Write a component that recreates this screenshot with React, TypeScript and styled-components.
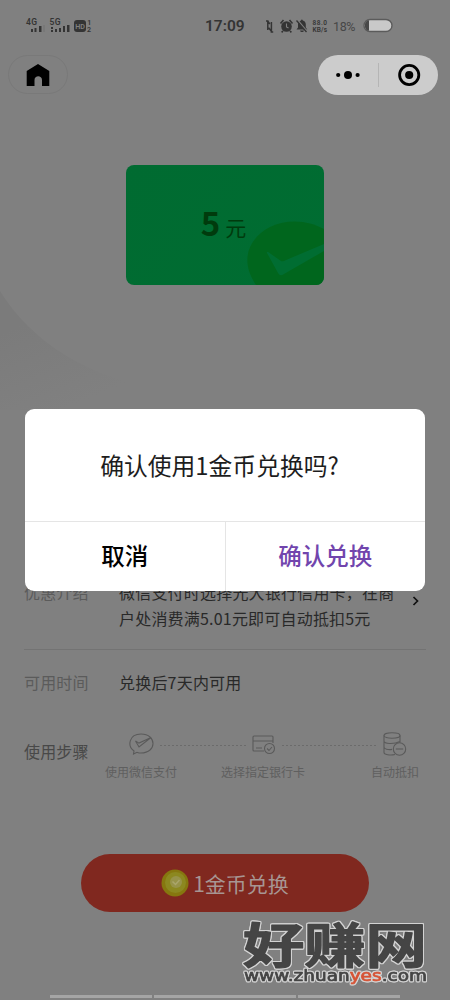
import React from 'react';
import styled, { createGlobalStyle } from 'styled-components';

const Global = createGlobalStyle`
  * { box-sizing: border-box; }
  body { margin: 0; background: #808080; }
  button { font: inherit; border: 0; background: none; padding: 0; margin: 0; }
`;

const Screen = styled.main`
  position: relative;
  width: 450px;
  height: 1000px;
  overflow: hidden;
  display: flex;
  flex-direction: column;
  background: #808080;
  color: #202020;
  font-family: 'Noto Sans CJK SC', sans-serif;
`;

const Backdrop = styled.svg`
  position: absolute;
  left: 0;
  top: 280px;
`;

const StatusBar = styled.header`
  display: flex;
  align-items: center;
  height: 52px;
  padding-left: 25px;
  color: #343434;
  font-family: Roboto, sans-serif;
`;

const Clock = styled.time`
  margin-left: 113px;
  width: 41px;
  font-size: 15.5px;
  font-weight: 600;
  line-height: 20px;
  white-space: nowrap;
`;

const StatusIcons = styled.svg`
  margin-left: 19px;
`;

const NavBar = styled.nav`
  position: relative;
  display: flex;
  justify-content: space-between;
  height: 43px;
  padding: 3px 12px 0 8px;
`;

const HomeButton = styled.button`
  display: flex;
  align-items: center;
  justify-content: center;
  width: 60px;
  height: 39px;
  border: 1px solid #797979;
  border-radius: 20px;
`;

const Capsule = styled.div`
  display: flex;
  align-items: center;
  width: 120px;
  height: 40px;
  border-radius: 20px;
  background: #cccccc;
`;

const Coupon = styled.section`
  position: relative;
  display: flex;
  align-items: baseline;
  justify-content: center;
  flex: none;
  width: 198px;
  height: 120px;
  margin: 70px auto 0;
  padding: 32px 3px 0 0;
  border-radius: 8px;
  overflow: hidden;
  background: linear-gradient(135deg, #006b31, #006d32);
  color: #003b0d;
`;

const CouponMark = styled.svg`
  position: absolute;
  right: 0;
  bottom: 0;
`;

const Amount = styled.strong`
  position: relative;
  font-size: 33px;
  line-height: 50px;
  font-weight: 700;
`;

const Unit = styled.span`
  position: relative;
  margin-left: 5px;
  font-size: 21px;
  line-height: 30px;
`;

const Details = styled.section`
  display: flex;
  flex-direction: column;
  margin: 294px 24px 0;
  font-size: 16px;
`;

const DetailRow = styled.div<{ $height: number; $top?: number; $line?: boolean }>`
  display: flex;
  align-items: flex-start;
  height: ${(p) => p.$height}px;
  padding-top: ${(p) => p.$top ?? 0}px;
  border-bottom: ${(p) => (p.$line ? '1px solid #737373' : '0')};
`;

const Label = styled.span<{ $dark?: boolean }>`
  flex: none;
  width: 95px;
  line-height: 26px;
  letter-spacing: 0.15px;
  color: ${(p) => (p.$dark ? '#484848' : '#5b5b5b')};
`;

const Value = styled.span`
  flex: none;
  width: 284px;
  line-height: 26px;
  letter-spacing: 0.2px;
  white-space: nowrap;
  color: #292929;
`;

const Arrow = styled.svg`
  margin: 16px 0 0 8px;
`;

const Steps = styled.div`
  display: flex;
  align-items: flex-start;
  width: 314px;
  margin: -7px 0 0 -14px;
`;

const Step = styled.div`
  display: flex;
  flex: none;
  flex-direction: column;
  align-items: center;
  font-size: 12px;
  line-height: 18px;
  white-space: nowrap;
  color: #5f5f5f;
  svg { margin-bottom: 6px; }
`;

const Dots = styled.i<{ $width: number; $before: number; $after: number }>`
  flex: none;
  width: ${(p) => p.$width}px;
  height: 1px;
  margin: 14px ${(p) => -p.$after}px 0 ${(p) => -p.$before}px;
  background: repeating-linear-gradient(90deg, #6b6b6b 0 2px, transparent 2px 4px);
`;

const Redeem = styled.button`
  display: flex;
  flex: none;
  align-items: center;
  justify-content: center;
  gap: 4px;
  width: 288px;
  height: 58px;
  margin: 64px 0 0 81px;
  border-radius: 29px;
  background: #80281f;
  color: #a79693;
  font-size: 21px;
`;

const Dialog = styled.section`
  position: absolute;
  left: 25px;
  top: 409px;
  display: flex;
  flex-direction: column;
  width: 400px;
  height: 182px;
  border-radius: 9px;
  background: #fff;
  overflow: hidden;
`;

const Message = styled.p`
  margin: 0;
  height: 113px;
  padding-right: 11px;
  border-bottom: 1px solid #e5e5e5;
  color: #1d1d1d;
  font-size: 23.8px;
  line-height: 112px;
  text-align: center;
`;

const Actions = styled.div`
  display: flex;
  flex: 1;
`;

const Action = styled.button<{ $primary?: boolean }>`
  flex: 1;
  padding-bottom: 3px;
  color: ${(p) => (p.$primary ? '#7145ad' : '#000')};
  border-left: ${(p) => (p.$primary ? '1px solid #e5e5e5' : '0')};
  font-size: 23.5px;
  font-weight: 500;
  line-height: 64px;
`;

const Watermark = styled.svg`
  position: absolute;
  left: 236px;
  top: 900px;
  overflow: visible;
  filter: drop-shadow(1px 0 0 #d2d2d2) drop-shadow(-1px 0 0 #d2d2d2)
    drop-shadow(0 1px 0 #d2d2d2) drop-shadow(0 -1px 0 #d2d2d2);
`;

const GestureBar = styled.div`
  display: flex;
  gap: 2px;
  position: absolute;
  left: 50px;
  bottom: 2px;
  width: 350px;
  height: 3px;
`;

const GesturePart = styled.i<{ $grow: number }>`
  flex: ${(p) => p.$grow};
  background: #a5a5a5;
`;

const Signals = () => (
  <svg width="67" height="20" viewBox="25 16 67 20" fill="#343434" fontFamily="Roboto" fontWeight="600">
    <text x="26" y="25" fontSize="8.5" textLength="11">4G</text>
    <text x="49.5" y="25" fontSize="8.5" textLength="11">5G</text>
    <path d="M31 29h2v3h-2zM34.5 28h2v4h-2zM39 26h2.5v6H39zM51 27h2v2h-2zM51 30h2v2h-2zM55 29h2v3h-2zM59 28h2v4h-2zM63 26h2v6h-2zM67 25h2.5v7H67z" />
    <path d="M43.5 25h1v7h-1z" opacity=".2" />
    <rect x="74" y="20" width="12" height="12" rx="3" />
    <text x="75.2" y="29.2" fontSize="7.5" fill="#808080" textLength="9.8" lengthAdjust="spacingAndGlyphs">HD</text>
    <text x="87.3" y="25" fontSize="7">1</text>
    <text x="87" y="32" fontSize="7">2</text>
  </svg>
);

const SystemIcons = () => (
  <StatusIcons width="132" height="20" viewBox="265 16 132 20" fill="#343434">
    <path d="M266 21h1.8v9M268 21.5l1.8 2.5M273.2 32h-1.8V22M271.2 31l-2.6-3.2" fill="none" stroke="#343434" strokeWidth="1.5" />
    <circle cx="286.5" cy="26.5" r="5.3" />
    <path d="M280.5 23.5l3-3.5M289.5 20l3 3.5M283 31l-1.4 1.4M290 31l1.4 1.4" stroke="#343434" strokeWidth="1.6" />
    <path d="M286.5 23.5v3.4l2 1" fill="none" stroke="#808080" strokeWidth="1.1" />
    <path d="M296.5 29.5l1.5-2v-3.2c0-2.4 1.7-3.6 3-3.9.2-1.2 1.6-1.2 1.8 0 1.7.4 3 1.8 3 3.9v3.2l1.5 2zM300 30.5h4c-.4 2-3.6 2-4 0z" />
    <path d="M297.5 20l10 12" stroke="#808080" strokeWidth="1.6" />
    <path d="M296.5 20.5l10 11.5" stroke="#343434" strokeWidth="1.3" />
    <g fontFamily="Roboto" fontWeight="600" fontSize="6.5">
      <text x="312.5" y="25" textLength="14.5">88.0</text>
      <text x="312.5" y="31.8" textLength="14.5">KB/s</text>
    </g>
    <text x="333" y="30.5" fontFamily="Roboto" fontSize="12.5" fill="#474747" textLength="22.5">18%</text>
    <rect x="364" y="19.5" width="28" height="12" rx="6" fill="#c9c9c9" stroke="#5b5b5b" strokeWidth="1.4" />
    <path d="M369 20.2v10.6c-5.6 0-5.6-10.6 0-10.6z" fill="#484848" />
  </StatusIcons>
);

export default function App() {
  return (
    <>
      <Global />
      <Screen>
        <Backdrop width="220" height="130" viewBox="0 0 220 130">
          <defs>
            <linearGradient id="fade" x1="0" y1="0" x2=".65" y2="1">
              <stop offset=".25" stopColor="#7b7b7b" />
              <stop offset=".85" stopColor="#808080" />
            </linearGradient>
          </defs>
          <path d="M0 11C30 60 90 102 170 109L190 130H0Z" fill="url(#fade)" />
        </Backdrop>
        <StatusBar>
          <Signals />
          <Clock>17:09</Clock>
          <SystemIcons />
        </StatusBar>
        <NavBar>
          <HomeButton aria-label="首页">
            <svg width="24" height="24" viewBox="0 0 24 24">
              <path d="M12 1L23.3 8v15H16v-6c0-5-7.5-5-7.5 0v6H.7V8z" fill="#000" />
            </svg>
          </HomeButton>
          <Capsule>
            <svg width="120" height="40" viewBox="0 0 120 40">
              <circle cx="20.2" cy="20" r="2.1" />
              <circle cx="30" cy="20" r="4" />
              <circle cx="39.6" cy="20" r="2.1" />
              <path d="M60.5 8v24" stroke="#b5b5b5" />
              <circle cx="91.2" cy="20" r="9.6" fill="none" stroke="#000" strokeWidth="2.8" />
              <circle cx="91.2" cy="20" r="4.1" />
            </svg>
          </Capsule>
        </NavBar>
        <Coupon>
          <CouponMark width="78" height="64" viewBox="0 0 78 64">
            <path d="M10 64C-6 41 1 18 24 6C43-3 63 0 78 8V64z" fill="#00661d" />
            <path d="M21 32Q20 29 25 33L35 40Q37 41 40 39L78 23V30L38 53Q34 56 32 52z" fill="#006d32" />
          </CouponMark>
          <Amount>5</Amount>
          <Unit>元</Unit>
        </Coupon>
        <Details>
          <DetailRow $height={71} $line>
            <Label>优惠介绍</Label>
            <Value>微信支付时选择光大银行信用卡，在商<br />户处消费满5.01元即可自动抵扣5元</Value>
            <Arrow width="10" height="12" viewBox="0 0 10 12">
              <path d="M2.5 2l4 4-4 4" fill="none" stroke="#101010" strokeWidth="1.7" />
            </Arrow>
          </DetailRow>
          <DetailRow $height={88} $top={19}>
            <Label>可用时间</Label>
            <Value>兑换后7天内可用</Value>
          </DetailRow>
          <DetailRow $height={52}>
            <Label $dark>使用步骤</Label>
            <Steps>
              <Step>
                <svg width="26" height="26" viewBox="0 0 26 26" fill="none" stroke="#5a5a5a" strokeWidth="1.1">
                  <path d="M6 20C-1 15 1 3 13 3c16 0 16 19 0 19-2 0-3-.4-4-.7L5.5 23z" />
                  <path d="M7.5 10l3.5 2.1L23 6.5 11 16z" />
                </svg>
                使用微信支付
              </Step>
              <Dots $width={87} $before={17} $after={26} />
              <Step>
                <svg width="26" height="26" viewBox="0 0 26 26" fill="none" stroke="#5a5a5a" strokeWidth="1.1">
                  <path d="M14 20H4q-1 0-1-1V6q0-1 1-1h18q1 0 1 1v6M3 10h20M6 17h6" />
                  <circle cx="19.5" cy="17.5" r="5" />
                  <path d="M17 17.5l2 2 3-3.5" />
                </svg>
                选择指定银行卡
              </Step>
              <Dots $width={94} $before={23} $after={5} />
              <Step>
                <svg width="26" height="26" viewBox="0 0 26 26" fill="none" stroke="#5a5a5a" strokeWidth="1.1">
                  <ellipse cx="10" cy="4.5" rx="8" ry="2.7" />
                  <path d="M2 4.5v17c0 2 6 3.2 11 2M18 4.5v7M2 10c0 3 10 3.3 16 .5M2 16c0 2 4 3 8 2.4" />
                  <circle cx="17.5" cy="18" r="6.2" />
                  <path d="M13.8 18h7.4" />
                </svg>
                自动抵扣
              </Step>
            </Steps>
          </DetailRow>
        </Details>
        <Redeem>
          <svg width="28" height="28" viewBox="0 0 28 28">
            <circle cx="14" cy="14" r="13.5" fill="#86770f" />
            <circle cx="14.5" cy="13.5" r="10.5" fill="#8c8820" />
            <circle cx="15" cy="13" r="6" fill="#97934a" />
            <path d="M11.5 12.5l3 3 4-4.5" fill="none" stroke="#aaa56c" strokeWidth="1.5" />
          </svg>
          1金币兑换
        </Redeem>
        <Dialog role="dialog">
          <Message>确认使用1金币兑换吗?</Message>
          <Actions>
            <Action>取消</Action>
            <Action $primary>确认兑换</Action>
          </Actions>
        </Dialog>
        <GestureBar>
          <GesturePart $grow={102} />
          <GesturePart $grow={142} />
          <GesturePart $grow={102} />
        </GestureBar>
        <Watermark width="200" height="90" viewBox="0 0 200 90" fill="#454545" stroke="#454545" strokeLinejoin="round">
          <text transform="translate(7 63) scale(1.29 1)" fontFamily="Noto Sans CJK SC" fontWeight="700" fontSize="47.5" strokeWidth="1.2">好赚网</text>
          <text x="8" y="81" fontFamily="DejaVu Sans" fontSize="15.5" strokeWidth=".7" textLength="183" lengthAdjust="spacingAndGlyphs">
            www.zhuan<tspan fill="#d65335" stroke="#d65335">yes</tspan>.com
          </text>
        </Watermark>
      </Screen>
    </>
  );
}
